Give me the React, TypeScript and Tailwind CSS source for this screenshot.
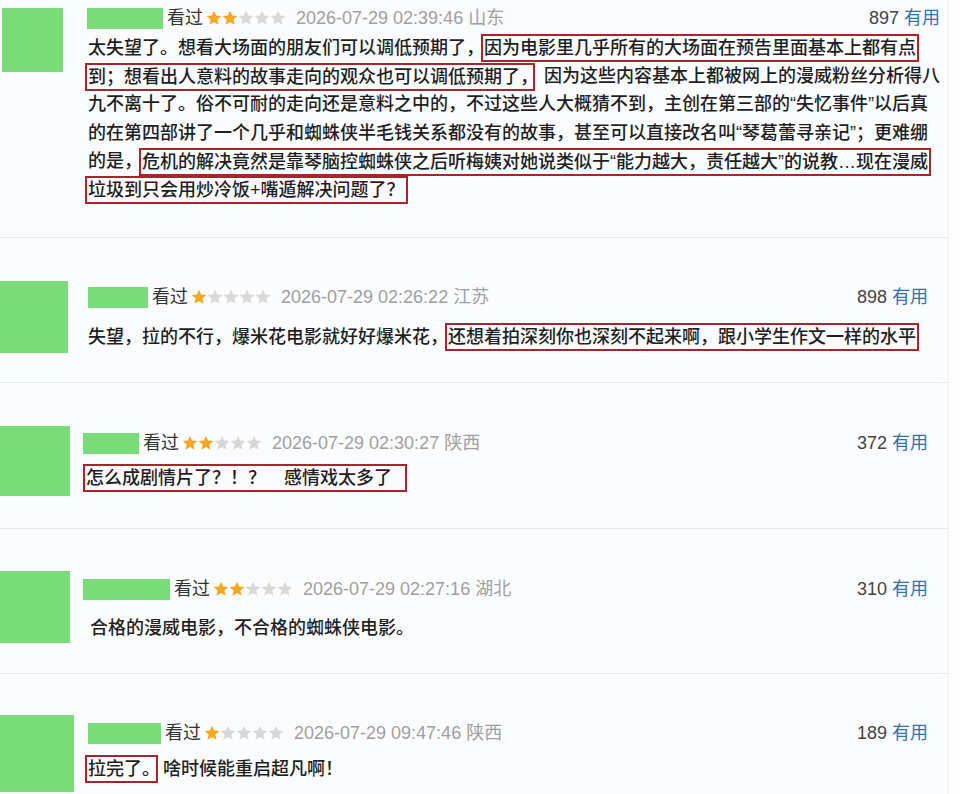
import React from 'react';

type Seg = { t: string; box?: boolean; trim?: number; ml?: number; pr?: number };

type Entry = {
  h: number;
  pt: number;
  avTop: number;
  avLeft: number;
  avW: number;
  avH: number;
  colLeft: number;
  colTop: number;
  nameW: number;
  stars: number;
  date: string;
  place: string;
  count: number;
  gap: number;
  textLeft: number;
  lines: Seg[][];
  border: boolean;
};

const entries: Entry[] = [
  {
    h: 238, pt: 7, avTop: 1, avLeft: 2, avW: 61, avH: 64, colLeft: 24, colTop: 0, nameW: 76,
    stars: 2, date: '2026-07-29 02:39:46', place: '山东', count: 897, gap: 5, textLeft: 1, border: true,
    lines: [
      [{ t: '太失望了。想看大场面的朋友们可以调低预期了，' }, { t: '因为电影里几乎所有的大场面在预告里面基本上都有点', box: true }],
      [{ t: '到；想看出人意料的故事走向的观众也可以调低预期了，', box: true, trim: 6 }, { t: '因为这些内容基本上都被网上的漫威粉丝分析得八', ml: 12 }],
      [{ t: '九不离十了。俗不可耐的走向还是意料之中的，不过这些人大概猜不到，主创在第三部的“失忆事件”以后真' }],
      [{ t: '的在第四部讲了一个几乎和蜘蛛侠半毛钱关系都没有的故事，甚至可以直接改名叫“琴葛蕾寻亲记”；更难绷' }],
      [{ t: '的是，' }, { t: '危机的解决竟然是靠琴脑控蜘蛛侠之后听梅姨对她说类似于“能力越大，责任越大”的说教…现在漫威', box: true }],
      [{ t: '垃圾到只会用炒冷饭+嘴遁解决问题了？', box: true }],
    ],
  },
  {
    h: 145, pt: 43, avTop: 0, avLeft: 0, avW: 68, avH: 72, colLeft: 20, colTop: 5, nameW: 60,
    stars: 1, date: '2026-07-29 02:26:22', place: '江苏', count: 898, gap: 15, textLeft: 0, border: true,
    lines: [
      [{ t: '失望，拉的不行，爆米花电影就好好爆米花，' }, { t: '还想着拍深刻你也深刻不起来啊，跟小学生作文一样的水平', box: true }],
    ],
  },
  {
    h: 146, pt: 43, avTop: 0, avLeft: 0, avW: 70, avH: 70, colLeft: 13, colTop: 6, nameW: 56,
    stars: 2, date: '2026-07-29 02:30:27', place: '陕西', count: 372, gap: 10, textLeft: 3, border: true,
    lines: [[{ t: '怎么成剧情片了？！？　感情戏太多了', box: true, pr: 13 }]],
  },
  {
    h: 145, pt: 42, avTop: 0, avLeft: 0, avW: 70, avH: 72, colLeft: 13, colTop: 7, nameW: 87,
    stars: 2, date: '2026-07-29 02:27:16', place: '湖北', count: 310, gap: 14, textLeft: 7, border: true,
    lines: [[{ t: '合格的漫威电影，不合格的蜘蛛侠电影。' }]],
  },
  {
    h: 118, pt: 41, avTop: 0, avLeft: 0, avW: 74, avH: 80, colLeft: 14, colTop: 7, nameW: 73,
    stars: 1, date: '2026-07-29 09:47:46', place: '陕西', count: 189, gap: 11, textLeft: 0, border: false,
    lines: [[{ t: '拉完了。', box: true, trim: 5 }, { t: '啥时候能重启超凡啊！', ml: 8 }]],
  },
];

function Star({ on }: { on: boolean }) {
  return (
    <svg width="16" height="16" viewBox="0 0 24 24" className="shrink-0">
      <polygon
        points="12,1 15.2,8.2 23,9 17.1,14.3 18.8,22 12,18 5.2,22 6.9,14.3 1,9 8.8,8.2"
        fill={on ? '#f5a623' : '#d8d8d8'}
      />
    </svg>
  );
}

function Comment({ e }: { e: Entry }) {
  return (
    <div
      className={`flex items-start pr-[20px] overflow-hidden ${e.border ? 'border-b border-[#e5e8ec]' : ''}`}
      style={{ height: e.h, paddingTop: e.pt }}
    >
      <div
        className="shrink-0 bg-[#78dc78]"
        style={{ marginLeft: e.avLeft, marginTop: e.avTop, width: e.avW, height: e.avH }}
      />
      <div className="flex-1 flex flex-col" style={{ marginLeft: e.colLeft, marginTop: e.colTop }}>
        <div className="h-[22px] flex items-center justify-between">
          <div className="flex items-center">
            <div className="h-[21px] bg-[#78dc78]" style={{ width: e.nameW }} />
            <span className="ml-[4px] text-[18px] text-[#333]">看过</span>
            <span className="ml-[3px] flex items-center">
              {[0, 1, 2, 3, 4].map((i) => (
                <Star key={i} on={i < e.stars} />
              ))}
            </span>
            <span className="ml-[10px] text-[18px] text-[#a0a0a0]">
              {e.date} {e.place}
            </span>
          </div>
          <div className="text-[18px]">
            <span className="text-[#444]">{e.count}</span>
            <span className="ml-[5px] text-[#3471b3]">有用</span>
          </div>
        </div>
        <div style={{ marginTop: e.gap, marginLeft: e.textLeft }}>
          {e.lines.map((line, li) => (
            <div
              key={li}
              className="h-[28.4px] flex items-center whitespace-nowrap text-[18px] font-medium text-[#1f1f1f]"
            >
              {line.map((s, si) =>
                s.box ? (
                  <span
                    key={si}
                    className="shrink-0 h-[28px] leading-[24px] border-2 border-[#a5262b] pl-[1px] -mx-[3px]"
                    style={{ paddingRight: s.pr ?? 1 }}
                  >
                    <span className="inline-block" style={{ marginRight: s.trim ? -s.trim : 0 }}>
                      {s.t}
                    </span>
                  </span>
                ) : (
                  <span key={si} style={{ marginLeft: s.ml }}>
                    {s.t}
                  </span>
                )
              )}
            </div>
          ))}
        </div>
      </div>
    </div>
  );
}

export default function App() {
  return (
    <div
      lang="zh-CN"
      className="w-[960px] h-[794px] overflow-hidden flex bg-[#fbfcfe]"
      style={{ fontFamily: '"Liberation Sans", "Noto Sans CJK SC", sans-serif' }}
    >
      <div className="w-[948px] shrink-0">
        {entries.map((e, i) => (
          <Comment key={i} e={e} />
        ))}
      </div>
      <div className="flex-1 border-l border-[#f1f3f6] bg-[#fefefe]" />
    </div>
  );
}
